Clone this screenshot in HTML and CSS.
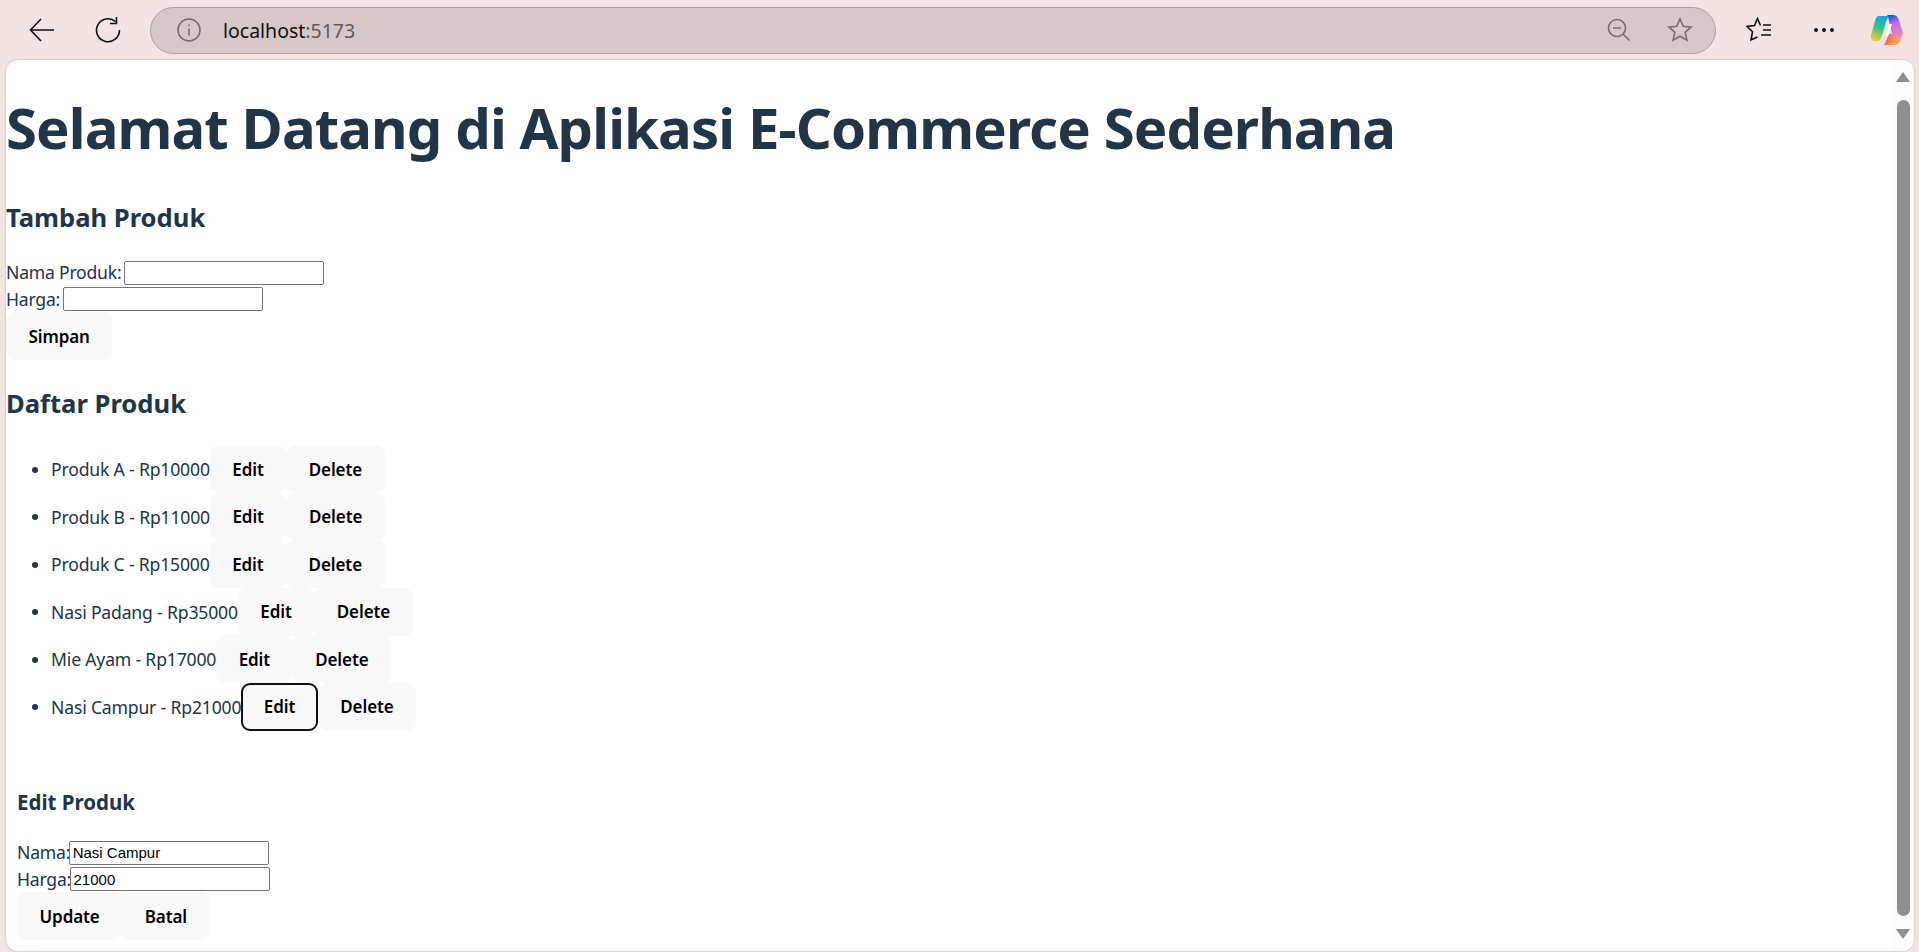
FILE: index.html
```html
<!DOCTYPE html>
<html lang="en">
  <head>
    <meta charset="UTF-8" />
    <meta name="viewport" content="width=device-width, initial-scale=1.0" />
    <title>E-Commerce Sederhana</title>
    <link rel="stylesheet" href="styles.css">
  </head>
  <body>
    <div class="toolbar">
      <svg class="tool-icon back" width="28" height="28" viewBox="0 0 28 28">
        <path d="M26 14H3M13 3 2.500 14 13 25" />
      </svg>
      <svg class="tool-icon reload" width="28" height="28" viewBox="0 0 28 28">
        <path d="M21.500 5.500A11.500 11.500 0 1 0 25.500 14M22.500 1v6.500H16" />
      </svg>
      <div class="address">
        <svg class="addr-icon" width="26" height="26" viewBox="0 0 26 26">
          <circle cx="13" cy="13" r="11" />
          <path d="M13 11.500v7M13 7.500v1.800" />
        </svg>
        <span class="url">localhost<span class="url-port">:5173</span></span>
        <svg class="addr-icon zoom-out" width="24" height="24" viewBox="0 0 24 24">
          <circle cx="10" cy="10" r="8.500" />
          <path d="M6 10h8M16 16l6.500 6.500" />
        </svg>
        <svg class="addr-icon" width="26" height="26" viewBox="0 0 26 26">
          <path d="M13 2l3.300 7.300 7.700.8-5.800 5.200 1.700 7.900L13 19.200l-6.900 4 1.700-7.900L2 10.100l7.700-.8z" />
        </svg>
      </div>
      <svg class="tool-icon favs" width="26" height="26" viewBox="0 0 26 26">
        <path d="M14.500 8.500 11.500 1.500 8.500 8.500 1 9.500l5.500 5.300L5 23l6.500-3M17 8h8M17 13h8M15 18h10" />
      </svg>
      <svg class="dots" width="22" height="6" viewBox="0 0 22 6">
        <circle cx="3" cy="3" r="2" />
        <circle cx="11" cy="3" r="2" />
        <circle cx="19" cy="3" r="2" />
      </svg>
      <svg class="copilot" width="34" height="32" viewBox="0 0 34 32">
        <defs>
          <linearGradient id="cpLeft" x1="0.600" y1="0" x2="0.300" y2="1">
            <stop offset="0" stop-color="#12a4ea" />
            <stop offset="0.500" stop-color="#3cc47c" />
            <stop offset="1" stop-color="#f5cf2e" />
          </linearGradient>
          <linearGradient id="cpRight" x1="0.300" y1="0" x2="0.600" y2="1">
            <stop offset="0" stop-color="#1d55cf" />
            <stop offset="0.350" stop-color="#b76ae6" />
            <stop offset="1" stop-color="#f08ab0" />
          </linearGradient>
          <linearGradient id="cpBottom" x1="0" y1="0" x2="1" y2="0.400">
            <stop offset="0" stop-color="#ef4e3a" />
            <stop offset="1" stop-color="#fbb25c" />
          </linearGradient>
        </defs>
        <path fill="url(#cpBottom)" d="M13 31h11c4 0 6-2 7-6l1-5H19l-3 7c-1 2-1.500 4-3 4z" />
        <path fill="url(#cpRight)" d="M17 1h6c3 0 5 2 6 5l3.500 11c1 4-1 7-4 7h-5.500l-4-17c-.5-3-1-5-2-6z" />
        <path fill="url(#cpLeft)" d="M9 2h10c-1 1-2 3-3 6l-4 14c-1 3-2 5-5 5H5c-3 0-5-2.500-4-6L5 7c.8-3 2-5 4-5z" />
        <path fill="#fff" d="M19.500 10h2.500l-3.500 11c-.3 1-1 1.500-2 1.500h-1z" />
      </svg>
    </div>

    <div class="viewport">
      <main class="page">
        <h1>Selamat Datang di Aplikasi E-Commerce Sederhana</h1>

        <h2>Tambah Produk</h2>
        <form class="form-plain">
          <div class="field">
            <label>Nama Produk: </label><input type="text" class="text-input" />
          </div>
          <div class="field">
            <label>Harga: </label><input type="text" class="text-input" />
          </div>
          <button type="button">Simpan</button>
        </form>

        <h2>Daftar Produk</h2>
        <ul class="product-list">
          <li>Produk A - Rp10000<button type="button">Edit</button><button type="button">Delete</button></li>
          <li>Produk B - Rp11000<button type="button">Edit</button><button type="button">Delete</button></li>
          <li>Produk C - Rp15000<button type="button">Edit</button><button type="button">Delete</button></li>
          <li>Nasi Padang - Rp35000<button type="button">Edit</button><button type="button">Delete</button></li>
          <li>Mie Ayam - Rp17000<button type="button">Edit</button><button type="button">Delete</button></li>
          <li>Nasi Campur - Rp21000<button type="button" class="focused">Edit</button><button type="button">Delete</button></li>
        </ul>

        <section class="edit-box">
          <h3>Edit Produk</h3>
          <div class="field">
            <label>Nama:</label><input type="text" class="text-input" value="Nasi Campur" />
          </div>
          <div class="field">
            <label>Harga:</label><input type="text" class="text-input" value="21000" />
          </div>
          <button type="button">Update</button><button type="button">Batal</button>
        </section>
      </main>

      <div class="scrollbar">
        <span class="arrow-up"></span>
        <span class="thumb"></span>
        <span class="arrow-down"></span>
      </div>
    </div>
  </body>
</html>
```

FILE: styles.css
```css
html,
body {
  height: 100%;
}
body {
  margin: 0;
  background-color: #f1e4e3;
  display: flex;
  flex-direction: column;
  overflow: hidden;
  font-family: "Noto Sans", sans-serif;
}

/* browser toolbar */
.toolbar {
  height: 60px;
  flex: none;
  display: flex;
  align-items: center;
  padding-left: 28px;
  padding-right: 15px;
  box-sizing: border-box;
}
.tool-icon path {
  fill: none;
  stroke: #111;
  stroke-width: 1.6;
}
.reload {
  margin-left: 38px;
}
.address {
  width: 1568px;
  height: 47px;
  box-sizing: border-box;
  margin-left: 28px;
  padding: 0 22px 0 25px;
  display: flex;
  align-items: center;
  background-color: #d6c8c8;
  border: 1px solid #ad9f9f;
  border-radius: 24px;
}
.addr-icon circle,
.addr-icon path {
  fill: none;
  stroke: #727070;
  stroke-width: 1.6;
}
.url {
  margin-left: 21px;
  font-size: 19.5px;
  color: #111;
  flex: 1;
}
.url-port {
  color: #5d5a5c;
}
.zoom-out {
  margin-right: 36px;
}
.favs {
  margin-left: 30px;
}
.dots {
  margin-left: 41px;
  fill: #111;
}
.copilot {
  margin-left: 35px;
}

/* page area */
.viewport {
  flex: 1;
  min-height: 0;
  margin: 0 5px 1px 6px;
  display: flex;
  background-color: #fff;
  border-radius: 12px;
  box-shadow: 0 0 2px rgba(0, 0, 0, 0.25);
  overflow: hidden;
}
.page {
  flex: 1;
  min-width: 0;
  color: #213547;
  font-size: 17.6px;
  line-height: 27px;
}
h1 {
  margin: 32px 0 40px;
  font-size: 56.300px;
  line-height: 70px;
  font-weight: 700;
  letter-spacing: -0.9px;
}
h2 {
  margin: 28px 0 25px;
  font-size: 25.6px;
  line-height: 32px;
  font-weight: 700;
}
h3 {
  margin: 0 0 23px;
  font-size: 20.500px;
  line-height: 28px;
  font-weight: 700;
}
.field {
  height: 27px;
  display: flex;
  align-items: center;
}
.field + .field {
  height: 26px;
}
label {
  white-space: pre;
  letter-spacing: -0.23px;
  margin-right: -1.5px;
}
.text-input {
  width: 200px;
  height: 24px;
  box-sizing: border-box;
  padding: 1px 3px;
  border: 1px solid #767676;
  border-radius: 2px;
  background-color: #fff;
  color: #000;
  font-family: "Liberation Sans", sans-serif;
  font-size: 15px;
}
button {
  height: 48px;
  margin: 0;
  padding: 0 20.500px;
  border: 2px solid transparent;
  border-radius: 9px;
  background-color: #f9f9f9;
  color: #000;
  font-family: "Noto Sans", sans-serif;
  font-size: 17px;
  font-weight: 600;
  letter-spacing: -0.1px;
  vertical-align: baseline;
}
button.focused {
  border-color: #111;
}
.product-list {
  margin: 0;
  padding-left: 45px;
}
.product-list li {
  height: 47.500px;
  line-height: 47.500px;
  letter-spacing: -0.18px;
}
.edit-box {
  margin-top: 58px;
  padding: 0 11px;
}

/* scrollbar */
.scrollbar {
  width: 22px;
  flex: none;
  background-color: #fdfdfd;
  display: flex;
  flex-direction: column;
  align-items: center;
}
.thumb {
  flex: 1;
  width: 13px;
  border-radius: 7px;
  background-color: #8f8f8f;
  margin: 18px 0 13px;
}
.arrow-up,
.arrow-down {
  width: 0;
  height: 0;
  border-left: 7.500px solid transparent;
  border-right: 7.500px solid transparent;
}
.arrow-up {
  margin-top: 12px;
  border-bottom: 10px solid #8f8f8f;
}
.arrow-down {
  margin-bottom: 12px;
  border-top: 10px solid #8f8f8f;
}
```
